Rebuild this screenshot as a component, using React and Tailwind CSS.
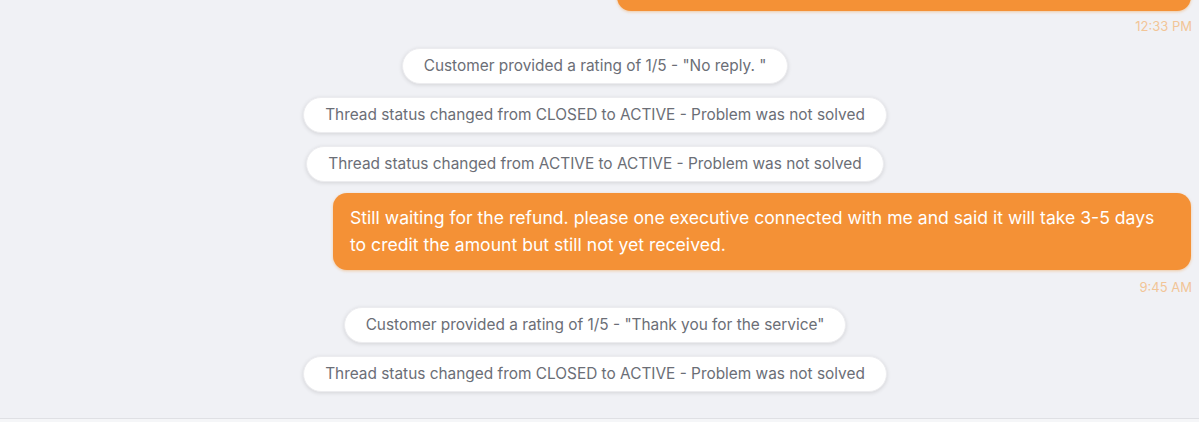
function SystemPill({ children }) {
  return (
    <div className="flex justify-center pr-[9px]">
      <div className="h-9 px-[21px] flex items-center rounded-full bg-white text-[15.4px] text-[#6b6e76] shadow-[0_1px_4px_rgba(0,0,0,0.12)] border border-[#ececef]">
        {children}
      </div>
    </div>
  );
}

function Bubble({ className, children }) {
  return (
    <div
      className={`bg-[#f49136] text-white text-[17.6px] leading-[27px] rounded-[14px] shadow-[0_1px_3px_rgba(240,150,60,0.45)] ${className}`}
    >
      {children}
    </div>
  );
}

function Time({ children, className }) {
  return (
    <div className={`text-right pr-[7px] text-[13px] leading-4 text-[#f2c597] ${className}`}>
      {children}
    </div>
  );
}

export default function App() {
  return (
    <div className="w-[1199px] h-[422px] overflow-hidden bg-[#f0f1f5] flex flex-col font-['Inter',sans-serif]">
      <div className="flex-1 overflow-hidden">
        <div className="flex justify-end pr-[8px] -mt-[29px]">
          <Bubble className="w-[574px] h-[40px]" />
        </div>
        <Time className="mt-[7px]">12:33 PM</Time>

        <div className="mt-[14px] flex flex-col gap-[13px]">
          <SystemPill>Customer provided a rating of 1/5 - "No reply. "</SystemPill>
          <SystemPill>Thread status changed from CLOSED to ACTIVE - Problem was not solved</SystemPill>
          <SystemPill>Thread status changed from ACTIVE to ACTIVE - Problem was not solved</SystemPill>
        </div>

        <div className="flex justify-end mt-[11px] pr-[8px]">
          <Bubble className="w-[858px] pl-[17px] pr-[22px] pt-[11px] pb-[12px]">
            Still waiting for the refund. please one executive connected with me and said it will take 3-5 days to credit the amount but still not yet received.
          </Bubble>
        </div>
        <Time className="mt-[9px]">9:45 AM</Time>

        <div className="mt-[12px] flex flex-col gap-[13px]">
          <SystemPill>Customer provided a rating of 1/5 - "Thank you for the service"</SystemPill>
          <SystemPill>Thread status changed from CLOSED to ACTIVE - Problem was not solved</SystemPill>
        </div>
      </div>
      <div className="h-[4px] border-t border-[#dfe0e4] bg-[#f5f6f8]" />
    </div>
  );
}
